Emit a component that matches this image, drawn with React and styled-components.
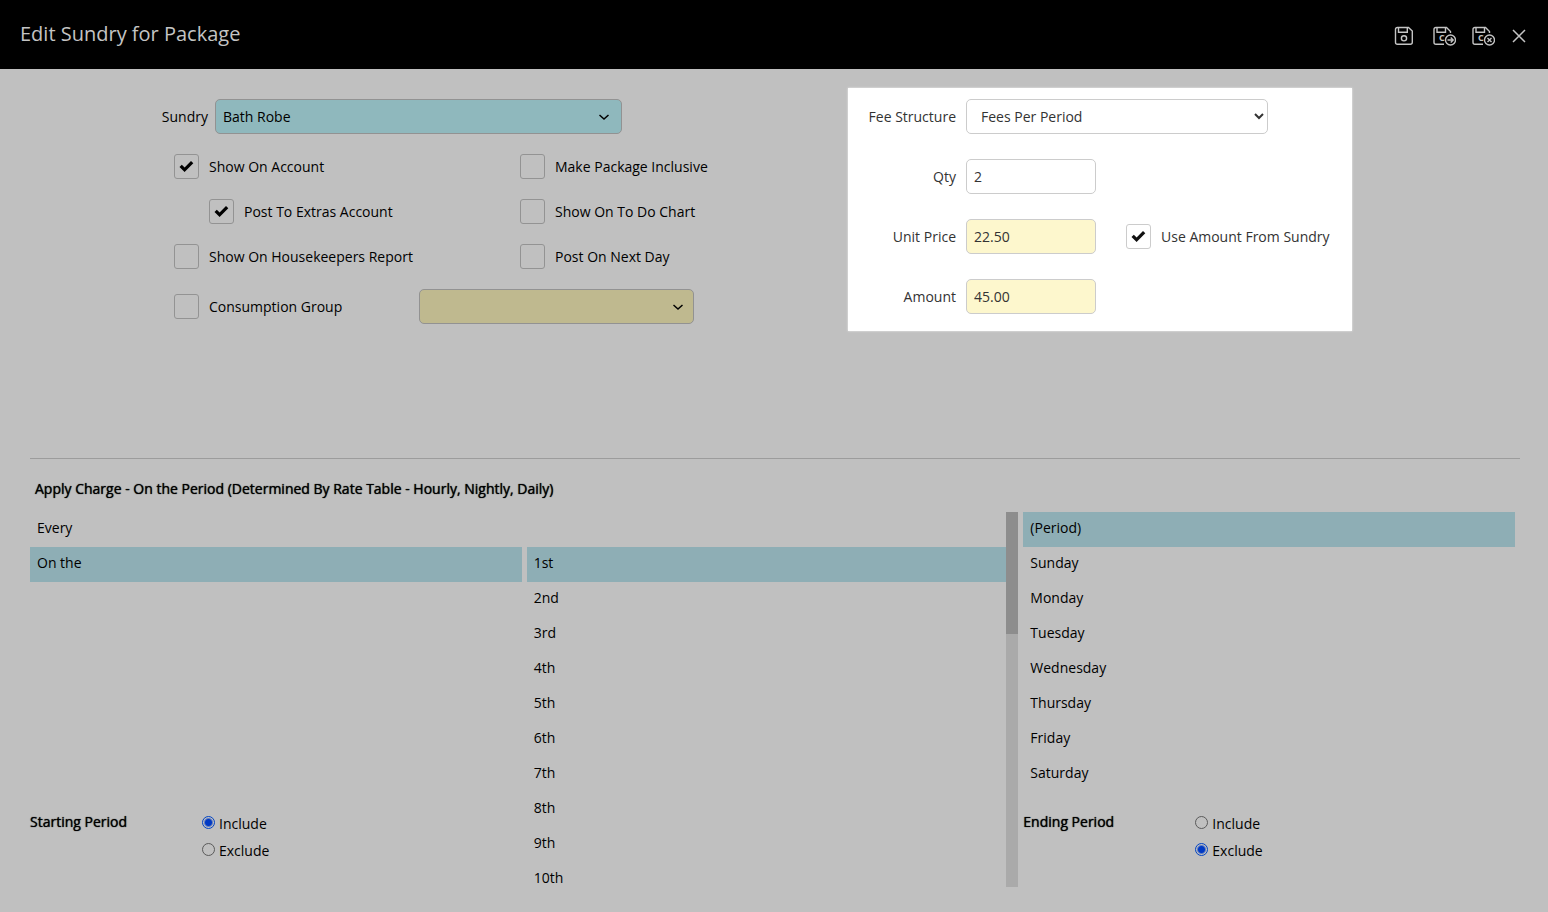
import React, { useState } from 'react';
import styled, { createGlobalStyle } from 'styled-components';

const GlobalStyle = createGlobalStyle`
  * {
    box-sizing: border-box;
  }
  body {
    margin: 0;
    background: #c0c0c0;
    color: #000;
    font-family: 'Open Sans', sans-serif;
    font-size: 14px;
    line-height: 20px;
  }
  button,
  input,
  select {
    margin: 0;
    font: inherit;
    color: inherit;
  }
`;

const Header = styled.header`
  display: flex;
  align-items: center;
  justify-content: space-between;
  height: 69px;
  padding: 0 20px;
  background: #000;
  color: #c4c4c4;
`;
const Title = styled.h1`
  margin: 0;
  padding-bottom: 2px;
  font-size: 20px;
  line-height: 28px;
  font-weight: 400;
`;
const Actions = styled.div`
  display: flex;
  align-items: center;
  gap: 15px;
  padding-top: 2px;
`;
const IconButton = styled.button`
  display: flex;
  padding: 0;
  border: 0;
  background: none;
  cursor: pointer;

  svg {
    display: block;
    fill: none;
    stroke: currentColor;
  }
`;
const Letter = styled.text`
  font-size: 9px;
  font-weight: 700;
  fill: currentColor;
  stroke: none;
`;

const Main = styled.main`
  padding: 19px 28px 20px 30px;
`;
const Top = styled.div`
  display: grid;
  grid-template-columns: 818fr 504fr 168fr;
  align-items: start;
  min-height: 370px;
`;
const Form = styled.div`
  display: flex;
  flex-direction: column;
  gap: 20px;
  padding-top: 11px;
`;
const Row = styled.div`
  display: flex;
  align-items: center;
  min-height: 35px;
`;
const Label = styled.label`
  flex: none;
  width: ${({ $width }) => $width}px;
  text-align: right;
`;
const Options = styled.div`
  display: grid;
  grid-template-columns: 346px 1fr;
  gap: 20px 0;
  padding-left: 144px;
`;
const GroupRow = styled(Row)`
  padding-left: 144px;
`;
const Tick = styled.label`
  display: flex;
  align-items: center;
  gap: 10px;
  width: ${({ $width }) => $width || 'auto'};
  margin-left: ${({ $indent }) => ($indent ? '35px' : 0)};
`;
const TickBox = styled.span`
  display: grid;
  place-items: center;
  width: 25px;
  height: 25px;

  > * {
    grid-area: 1 / 1;
  }
  svg {
    pointer-events: none;
  }
`;
const TickInput = styled.input`
  appearance: none;
  width: 25px;
  height: 25px;
  border: 1px solid ${({ $light }) => ($light ? '#ccc' : '#939393')};
  border-radius: 3px;
`;
const SelectWrap = styled.span`
  display: grid;
  align-items: center;
  flex: 0 1 ${({ $width }) => $width}px;
  margin-left: ${({ $gap }) => $gap || 0}px;

  > * {
    grid-area: 1 / 1;
  }
  svg {
    justify-self: end;
    margin-right: ${({ $inset }) => $inset || 12}px;
    pointer-events: none;
  }
`;
const DimSelect = styled.select`
  appearance: none;
  width: 100%;
  height: 35px;
  padding: 0 7px;
  border: 1px solid #929292;
  border-radius: 5px;
  background: ${({ $bg }) => $bg};
`;

const Panel = styled.section`
  display: flex;
  flex-direction: column;
  gap: 25px;
  padding: 11px 0 17px;
  background: #fff;
  box-shadow: 0 0 2px #eee;
  color: #333;
`;
const PanelRow = styled(Row)`
  gap: 10px;
`;
const Field = styled.input`
  width: 130px;
  height: 35px;
  padding: 0 7px;
  border: 1px solid #ccc;
  border-radius: 5px;
  background: ${({ $computed }) => ($computed ? '#fdf7cd' : '#fff')};
`;
const FeeSelect = styled.select`
  width: 302px;
  height: 35px;
  padding: 0 0 0 10px;
  border: 1px solid #ccc;
  border-radius: 5px;
  background: #fff;
`;
const Beside = styled.div`
  margin-left: 20px;
`;

const Divider = styled.hr`
  height: 1px;
  margin: 0;
  border: 0;
  background: #9c9c9c;
`;
const Strong = styled.h2`
  margin: 0;
  font-size: 14px;
  line-height: 20px;
  font-weight: 400;
  text-shadow: 0 0 1px #000;
`;
const ChargeTitle = styled(Strong)`
  padding: 20px 5px 13px;
`;
const Columns = styled.div`
  display: grid;
  grid-template-columns: repeat(3, minmax(0, 1fr));
  gap: 5px;
  height: 375px;
  padding-right: 5px;
`;
const Column = styled.div`
  display: flex;
  flex-direction: column;
  justify-content: space-between;
  min-height: 0;
`;
const ScrollColumn = styled.div`
  display: flex;
  min-height: 0;
`;
const List = styled.ul`
  flex: 1;
  margin: 0;
  padding: 0;
  list-style: none;
  overflow: ${({ $scroll }) => ($scroll ? 'auto' : 'visible')};
  scrollbar-width: none;
`;
const Item = styled.li`
  height: 35px;
  padding: 6px 7px;
  background: ${({ $active }) => ($active ? '#8eaeb5' : 'transparent')};
  cursor: pointer;
`;
const Track = styled.div`
  width: 12px;
  background: #aaa;
`;
const Thumb = styled.div`
  background: #8d8d8d;
`;
const Period = styled.div`
  display: flex;
  padding-bottom: 26px;
`;
const PeriodName = styled(Strong)`
  width: 172px;
`;
const Radios = styled.div`
  display: flex;
  flex-direction: column;
  gap: 7px;
  padding-top: 2px;
`;
const RadioLabel = styled.label`
  display: flex;
  align-items: center;
  gap: 4px;
`;
const Radio = styled.input`
  appearance: none;
  width: 13px;
  height: 13px;
  margin-bottom: 3px;
  border: 1px solid #5a5a5a;
  border-radius: 50%;

  &:checked {
    border-color: #0043c4;
    background: radial-gradient(circle, #0039c4 3px, #c0c0c0 5px);
  }
`;

const DAYS = [
  '(Period)',
  'Sunday',
  'Monday',
  'Tuesday',
  'Wednesday',
  'Thursday',
  'Friday',
  'Saturday',
];

const ordinal = n => {
  if (n > 10 && n < 14) return `${n}th`;
  return `${n}${{ 1: 'st', 2: 'nd', 3: 'rd' }[n % 10] || 'th'}`;
};
// the first row is blank, for "no occurrence"
const ORDINALS = [
  '',
  ...Array.from({ length: 31 }, (_, i) => ordinal(i + 1)),
  'Last',
];

const SaveIcon = () => (
  <svg width="24" height="20" viewBox="0 0 24 20" strokeWidth="1.4">
    <path d="M4.5 1.5H15.5L19.3 5V16.3Q19.3 18.3 17.3 18.3H4.5Q2.5 18.3 2.5 16.3V3.5Q2.5 1.5 4.5 1.5Z" />
    <path d="M5.5 1.5V6.3H14.3V1.5" />
    <circle cx="11" cy="12.3" r="2.6" />
  </svg>
);

const SaveWithBadge = ({ children }) => (
  <svg width="24" height="20" viewBox="0 0 24 20" strokeWidth="1.4">
    <path d="M12 18.3H4Q2 18.3 2 16.3V3.5Q2 1.5 4 1.5H14.5L18.5 5.5V7" />
    <path d="M5 1.5V6.3H13.5V1.5" />
    <Letter x="7" y="15">
      C
    </Letter>
    <circle cx="18.5" cy="14" r="5" />
    {children}
  </svg>
);

const Chevron = () => (
  <svg width="12" height="8" viewBox="0 0 12 8" fill="none" stroke="#000">
    <path d="M1.5 2L6 6L10.5 2" strokeWidth="1.5" />
  </svg>
);

const CheckMark = ({ color }) => (
  <svg width="15" height="13" viewBox="0 0 15 13" fill={color}>
    <path d="M0.5 7L2.8 4.8L5.6 7.6L12 1L14.3 3.2L5.6 12Z" />
  </svg>
);

const Checkbox = ({ text, initial = false, light, indent, width }) => {
  const [checked, setChecked] = useState(initial);
  return (
    <Tick $indent={indent} $width={width}>
      <TickBox>
        <TickInput
          type="checkbox"
          checked={checked}
          onChange={() => setChecked(!checked)}
          $light={light}
        />
        {checked && <CheckMark color={light ? '#111' : '#000'} />}
      </TickBox>
      {text}
    </Tick>
  );
};

const Choices = ({ items, initial, scroll, onScroll }) => {
  const [active, setActive] = useState(initial);
  return (
    <List $scroll={scroll} onScroll={onScroll}>
      {items.map(item => (
        <Item
          key={item}
          $active={item === active}
          onClick={() => setActive(item)}
        >
          {item}
        </Item>
      ))}
    </List>
  );
};

const OrdinalColumn = () => {
  const [top, setTop] = useState(0);
  const total = ORDINALS.length * 35;
  return (
    <ScrollColumn>
      <Choices
        items={ORDINALS}
        initial="1st"
        scroll
        onScroll={e => setTop(e.currentTarget.scrollTop)}
      />
      <Track>
        <Thumb
          style={{
            height: Math.round((375 * 375) / total),
            marginTop: Math.round((top * 375) / total),
          }}
        />
      </Track>
    </ScrollColumn>
  );
};

const PeriodChoice = ({ title, name, initial }) => (
  <Period role="radiogroup" aria-label={title}>
    <PeriodName>{title}</PeriodName>
    <Radios>
      {['Include', 'Exclude'].map(option => (
        <RadioLabel key={option}>
          <Radio
            type="radio"
            name={name}
            value={option}
            defaultChecked={option === initial}
          />
          {option}
        </RadioLabel>
      ))}
    </Radios>
  </Period>
);

const App = () => {
  return (
    <>
      <GlobalStyle />
      <Header>
        <Title>Edit Sundry for Package</Title>
        <Actions>
          <IconButton aria-label="Save">
            <SaveIcon />
          </IconButton>
          <IconButton aria-label="Save and continue">
            <SaveWithBadge>
              <path d="M15.5 14H21M18.7 11.5L21.2 14L18.7 16.5" />
            </SaveWithBadge>
          </IconButton>
          <IconButton aria-label="Save and close">
            <SaveWithBadge>
              <path d="M16.5 12L20.5 16M20.5 12L16.5 16" />
            </SaveWithBadge>
          </IconButton>
          <IconButton aria-label="Close">
            <svg width="18" height="18" viewBox="0 0 18 18" strokeWidth="1.5">
              <path d="M3 3L15 15M15 3L3 15" />
            </svg>
          </IconButton>
        </Actions>
      </Header>
      <Main>
        <Top>
          <Form>
            <Row>
              <Label htmlFor="sundry" $width={178}>
                Sundry
              </Label>
              <SelectWrap $width={407} $gap={7}>
                <DimSelect id="sundry" $bg="#8fb8bd">
                  <option>Bath Robe</option>
                </DimSelect>
                <Chevron />
              </SelectWrap>
            </Row>
            <Options>
              <Checkbox text="Show On Account" initial />
              <Checkbox text="Make Package Inclusive" />
              <Checkbox text="Post To Extras Account" initial indent />
              <Checkbox text="Show On To Do Chart" />
              <Checkbox text="Show On Housekeepers Report" />
              <Checkbox text="Post On Next Day" />
            </Options>
            <GroupRow>
              <Checkbox text="Consumption Group" width="245px" />
              <SelectWrap $width={275} $inset={10}>
                <DimSelect aria-label="Consumption Group" $bg="#bfb98f" />
                <Chevron />
              </SelectWrap>
            </GroupRow>
          </Form>
          <Panel>
            <PanelRow>
              <Label htmlFor="fee" $width={108}>
                Fee Structure
              </Label>
              <FeeSelect id="fee">
                <option>Fees Per Period</option>
              </FeeSelect>
            </PanelRow>
            <PanelRow>
              <Label htmlFor="qty" $width={108}>
                Qty
              </Label>
              <Field id="qty" defaultValue="2" />
            </PanelRow>
            <PanelRow>
              <Label htmlFor="price" $width={108}>
                Unit Price
              </Label>
              <Field id="price" defaultValue="22.50" $computed />
              <Beside>
                <Checkbox text="Use Amount From Sundry" initial light />
              </Beside>
            </PanelRow>
            <PanelRow>
              <Label htmlFor="amount" $width={108}>
                Amount
              </Label>
              <Field id="amount" defaultValue="45.00" $computed />
            </PanelRow>
          </Panel>
        </Top>
        <Divider />
        <ChargeTitle>
          Apply Charge - On the Period (Determined By Rate Table - Hourly,
          Nightly, Daily)
        </ChargeTitle>
        <Columns>
          <Column>
            <Choices items={['Every', 'On the']} initial="On the" />
            <PeriodChoice
              title="Starting Period"
              name="starting"
              initial="Include"
            />
          </Column>
          <OrdinalColumn />
          <Column>
            <Choices items={DAYS} initial="(Period)" />
            <PeriodChoice
              title="Ending Period"
              name="ending"
              initial="Exclude"
            />
          </Column>
        </Columns>
      </Main>
    </>
  );
};

export default App;
